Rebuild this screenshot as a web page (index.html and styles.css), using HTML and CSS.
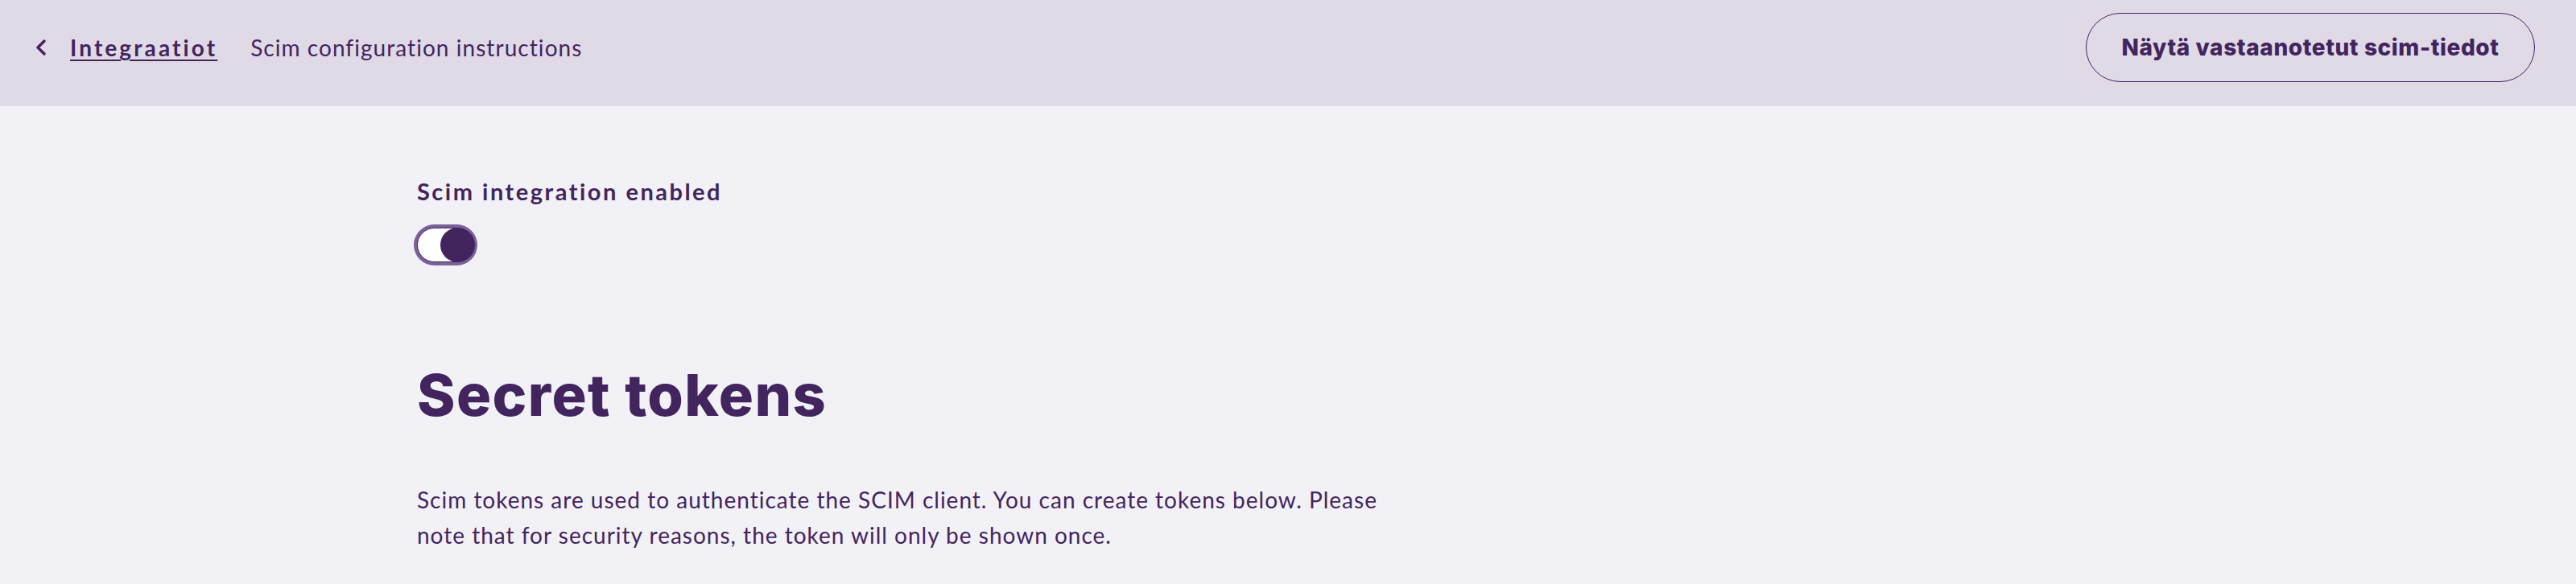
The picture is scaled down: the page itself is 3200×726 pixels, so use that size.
FILE: index.html
```html
<!DOCTYPE html>
<html lang="fi">
<head>
<meta charset="utf-8">
<title>Scim configuration instructions</title>
<link rel="stylesheet" href="styles.css">
</head>
<body>
<header class="topbar">
  <nav class="crumbs">
    <a class="back" href="#" aria-label="Takaisin">
      <svg width="14" height="20" viewBox="0 0 14 20"><path d="M11 2 L3 10 L11 18" fill="none" stroke="#42255f" stroke-width="3.4" stroke-linecap="round" stroke-linejoin="round"/></svg>
    </a>
    <a class="crumb-link" href="#">Integraatiot</a>
    <span class="crumb-current">Scim configuration instructions</span>
  </nav>
  <button class="outline-btn" type="button">Näytä vastaanotetut scim-tiedot</button>
</header>
<main class="content">
  <section class="setting">
    <div class="setting-label">Scim integration enabled</div>
    <div class="switch" role="switch" aria-checked="true">
      <span class="switch-knob"></span>
    </div>
  </section>
  <h1 class="title">Secret tokens</h1>
  <p class="intro">Scim tokens are used to authenticate the SCIM client. You can create tokens below. Please note that for security reasons, the token will only be shown once.</p>
</main>
</body>
</html>
```
FILE: styles.css
```css
html, body {
  margin: 0;
  padding: 0;
}
body {
  background: #f2f1f6;
  color: #42255f;
  font-family: Lato, "Noto Sans", sans-serif;
  width: 3200px;
  height: 726px;
  overflow: hidden;
}
.topbar {
  box-sizing: border-box;
  height: 132px;
  background: #e0dae6;
  display: flex;
  align-items: center;
  justify-content: space-between;
  padding: 0 51px 14px 44px;
}
.crumbs {
  display: flex;
  align-items: center;
  font-size: 28px;
}
.back {
  display: flex;
  align-items: center;
  margin-right: 29px;
}
.crumb-link {
  color: #42255f;
  font-weight: 700;
  text-decoration: underline;
  text-underline-offset: 4px;
  text-decoration-thickness: 2px;
  letter-spacing: 3.1px;
  margin-right: 41px;
}
.crumb-current {
  font-weight: 400;
  letter-spacing: 1.05px;
}
.outline-btn {
  box-sizing: border-box;
  width: 558px;
  height: 86px;
  border: 1.5px solid #42255f;
  border-radius: 43px;
  background: transparent;
  color: #42255f;
  font-family: Inter, sans-serif;
  font-weight: 800;
  font-size: 28px;
  letter-spacing: 0.6px;
  padding: 0;
}
.content {
  padding: 0 0 0 518px;
}
.setting {
  padding-top: 86px;
}
.setting-label {
  font-size: 29px;
  font-weight: 700;
  letter-spacing: 2.5px;
  line-height: 40px;
}
.switch {
  box-sizing: border-box;
  display: flex;
  justify-content: flex-end;
  align-items: center;
  width: 71px;
  height: 43px;
  margin-top: 25px;
  border-radius: 22px;
  background: #ffffff;
  border: 1.5px solid #42255f;
  box-shadow: 0 0 0 4px #7a6199;
}
.switch-knob {
  flex: none;
  width: 43px;
  height: 43px;
  border-radius: 50%;
  background: #42255f;
  margin-right: -1.5px;
}
.title {
  font-family: Inter, sans-serif;
  font-weight: 800;
  font-size: 72px;
  line-height: 90px;
  margin: 120px 0 0;
  letter-spacing: 1.4px;
}
.intro {
  margin: 63px 0 0;
  max-width: 1240px;
  font-size: 28px;
  line-height: 44px;
  letter-spacing: 1px;
}
```
